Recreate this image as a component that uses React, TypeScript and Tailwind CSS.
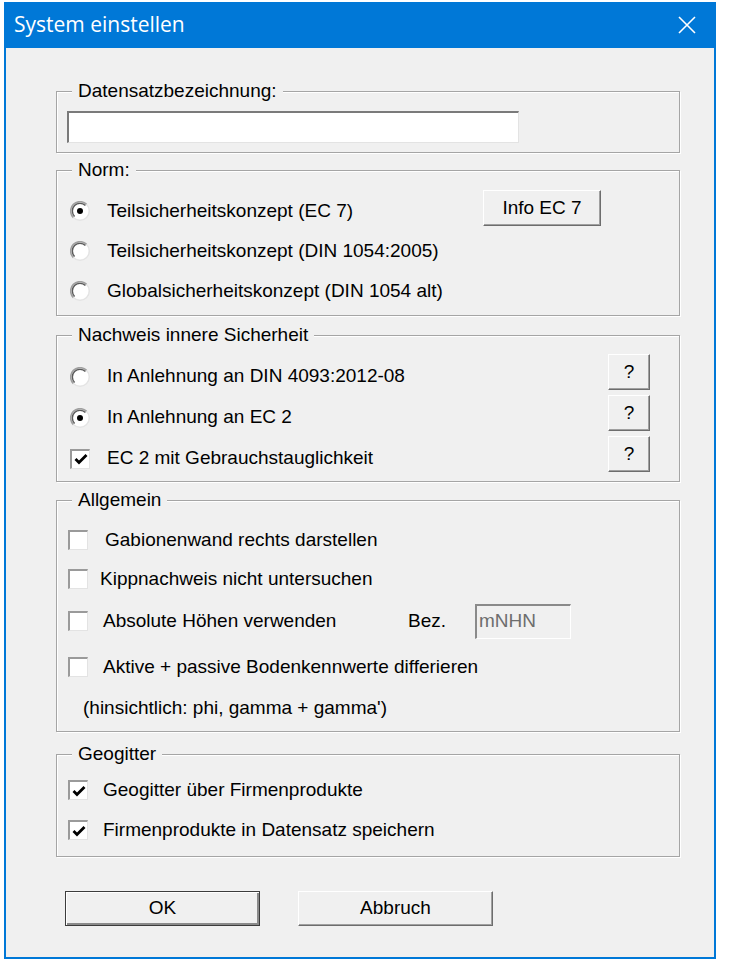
import React from "react";

const FONT = { fontFamily: '"Liberation Sans", Arial, sans-serif' };

function Radio({ checked }: { checked?: boolean }) {
  return (
    <svg width="20" height="20" viewBox="0 0 20 20" className="shrink-0">
      <circle cx="10" cy="10" r="8.5" fill="#fff" />
      <path d="M3.4 16.6 A9 9 0 0 1 16.6 3.4" fill="none" stroke="#a0a0a0" strokeWidth="1.6" />
      <path d="M4.6 15.4 A7.6 7.6 0 0 1 15.4 4.6" fill="none" stroke="#5a5a5a" strokeWidth="1.4" />
      <path d="M16.6 3.4 A9 9 0 0 1 3.4 16.6" fill="none" stroke="#e3e3e3" strokeWidth="1.2" />
      {checked && <circle cx="10" cy="10" r="3" fill="#000" />}
    </svg>
  );
}

function Check({ checked }: { checked?: boolean }) {
  return (
    <span className="w-[20px] h-[20px] shrink-0 bg-white border-t-2 border-l-2 border-t-[#9a9a9a] border-l-[#9a9a9a] border-r border-b border-r-[#e3e3e3] border-b-[#e3e3e3] flex items-center justify-center">
      {checked && (
        <svg width="14" height="12" viewBox="0 0 14 12">
          <path d="M1.5 6 L5 9.5 L12.5 2" fill="none" stroke="#000" strokeWidth="2.8" />
        </svg>
      )}
    </span>
  );
}

function Btn({ children, className }: { children: React.ReactNode; className: string }) {
  return (
    <div
      className={`bg-[#f0f0f0] border border-t-white border-l-white border-r-[#6d6d6d] border-b-[#6d6d6d] shadow-[inset_-1px_-1px_0_#a0a0a0] flex items-center justify-center text-[19px] text-black ${className}`}
    >
      {children}
    </div>
  );
}

function Group({ title, className, children }: { title: string; className: string; children?: React.ReactNode }) {
  return (
    <div
      className={`relative ml-[50px] w-[624px] border border-[#a5a5a5] shadow-[1px_1px_0_#fff,inset_1px_1px_0_#fff] ${className}`}
    >
      <span className="absolute -top-[12px] left-[15px] px-[6px] bg-[#f0f0f0] text-[19px] leading-[22px] text-black">
        {title}
      </span>
      {children}
    </div>
  );
}

export default function App() {
  return (
    <div className="w-[730px] h-[970px] bg-white pt-[2px] pl-[4px]" style={FONT}>
      <div className="w-[712px] h-[957px] bg-[#0078d7] px-[2px] pb-[2px] flex flex-col">
        <div className="h-[46px] flex items-center justify-between pl-[8px] pr-[18px]">
          <span
            className="text-white text-[21px] leading-none -mt-[2px]"
            style={{ fontFamily: '"Open Sans", "Noto Sans", sans-serif' }}
          >
            System einstellen
          </span>
          <svg width="18" height="18" viewBox="0 0 18 18">
            <path d="M1 1 L17 17 M17 1 L1 17" stroke="#fff" strokeWidth="1.6" />
          </svg>
        </div>
        <div className="flex-1 bg-[#f0f0f0] pt-[43px] text-[19px] text-black">
          <Group title="Datensatzbezeichnung:" className="h-[62px]">
            <div className="ml-[10px] mt-[19px] w-[452px] h-[32px] bg-white border-t-2 border-l-2 border-t-[#7a7a7a] border-l-[#7a7a7a] border-r border-b border-r-[#e3e3e3] border-b-[#e3e3e3]" />
          </Group>

          <Group title="Norm:" className="h-[146px] mt-[17px]">
            <div className="pt-[20px] pl-[13px]">
              <div className="h-[40px] flex items-center">
                <Radio checked />
                <span className="ml-[17px] w-[376px]">Teilsicherheitskonzept (EC 7)</span>
                <Btn className="w-[118px] h-[36px] -mt-[6px]">Info EC 7</Btn>
              </div>
              <div className="h-[40px] flex items-center">
                <Radio />
                <span className="ml-[17px]">Teilsicherheitskonzept (DIN 1054:2005)</span>
              </div>
              <div className="h-[40px] flex items-center">
                <Radio />
                <span className="ml-[17px]">Globalsicherheitskonzept (DIN 1054 alt)</span>
              </div>
            </div>
          </Group>

          <Group title="Nachweis innere Sicherheit" className="h-[147px] mt-[19px]">
            <div className="pt-[20px] pl-[13px]">
              {[
                { label: "In Anlehnung an DIN 4093:2012-08", kind: "radio", on: false },
                { label: "In Anlehnung an EC 2", kind: "radio", on: true },
                { label: "EC 2 mit Gebrauchstauglichkeit", kind: "check", on: true },
              ].map((r) => (
                <div key={r.label} className="h-[41px] flex items-center">
                  {r.kind === "radio" ? <Radio checked={r.on} /> : <Check checked={r.on} />}
                  <span className="ml-[17px] w-[501px]">{r.label}</span>
                  <Btn className="w-[42px] h-[36px] mb-[9px]">?</Btn>
                </div>
              ))}
            </div>
          </Group>

          <Group title="Allgemein" className="h-[232px] mt-[18px]">
            <div className="pt-[19px] pl-[11px]">
              <div className="h-[40px] flex items-center">
                <Check />
                <span className="ml-[17px]">Gabionenwand rechts darstellen</span>
              </div>
              <div className="h-[38px] flex items-center">
                <Check />
                <span className="ml-[12px]">Kippnachweis nicht untersuchen</span>
              </div>
              <div className="h-[46px] flex items-center">
                <Check />
                <span className="ml-[15px] w-[305px]">Absolute Höhen verwenden</span>
                <span className="w-[67px]">Bez.</span>
                <div className="w-[96px] h-[35px] bg-[#f0f0f0] border-t-2 border-l-2 border-t-[#8a8a8a] border-l-[#8a8a8a] border-r border-b border-r-white border-b-white flex items-center pl-[2px] text-[#6d6d6d]">
                  mNHN
                </div>
              </div>
              <div className="h-[46px] flex items-center">
                <Check />
                <span className="ml-[15px]">Aktive + passive Bodenkennwerte differieren</span>
              </div>
              <div className="h-[36px] flex items-center pl-[15px]">
                (hinsichtlich: phi, gamma + gamma')
              </div>
            </div>
          </Group>

          <Group title="Geogitter" className="h-[103px] mt-[22px]">
            <div className="pt-[15px] pl-[11px]">
              <div className="h-[40px] flex items-center">
                <Check checked />
                <span className="ml-[15px]">Geogitter über Firmenprodukte</span>
              </div>
              <div className="h-[40px] flex items-center">
                <Check checked />
                <span className="ml-[15px]">Firmenprodukte in Datensatz speichern</span>
              </div>
            </div>
          </Group>

          <div className="flex gap-[38px] ml-[59px] mt-[34px]">
            <Btn className="w-[195px] h-[35px] !border-[#3c3c3c] shadow-[inset_1px_1px_0_#fff,inset_-2px_-2px_0_#8a8a8a]">OK</Btn>
            <Btn className="w-[195px] h-[35px]">Abbruch</Btn>
          </div>
        </div>
      </div>
    </div>
  );
}
